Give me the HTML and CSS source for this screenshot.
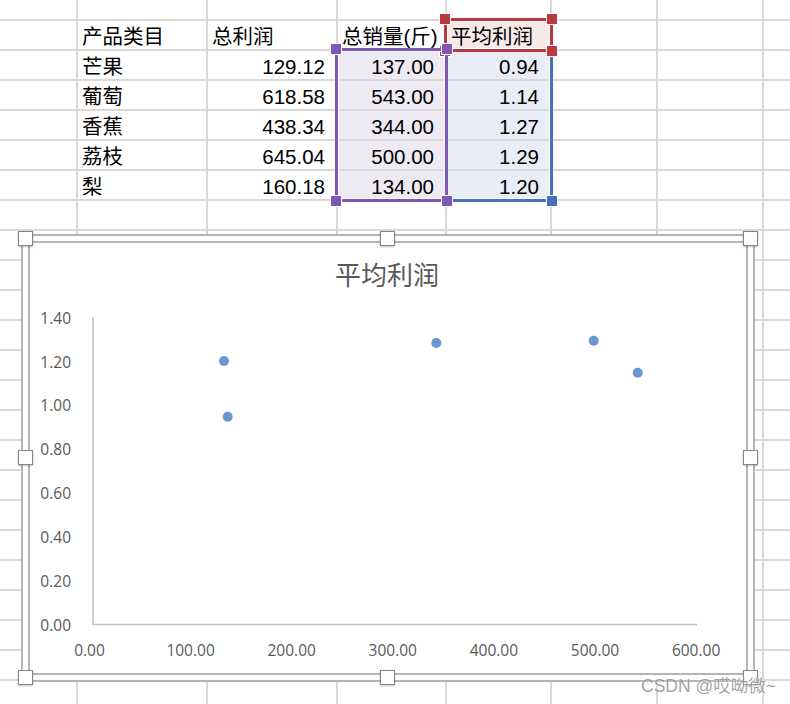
FILE: index.html
```html
<!DOCTYPE html>
<html lang="zh-CN">

<head>
    <meta charset="utf-8" />
    <link rel="stylesheet" href="styles.css">
</head>

<body>
    <div class="page">
        <div class="sheet">
            <div></div><div></div><div></div><div></div><div></div><div></div><div></div><div></div>
            <div></div><div>产品类目</div><div>总利润</div><div>总销量(斤)</div><div class="name">平均利润</div><div></div><div></div><div></div>
            <div></div><div>芒果</div><div class="num">129.12</div><div class="num x">137.00</div><div class="num y">0.94</div><div></div><div></div><div></div>
            <div></div><div>葡萄</div><div class="num">618.58</div><div class="num x">543.00</div><div class="num y">1.14</div><div></div><div></div><div></div>
            <div></div><div>香蕉</div><div class="num">438.34</div><div class="num x">344.00</div><div class="num y">1.27</div><div></div><div></div><div></div>
            <div></div><div>荔枝</div><div class="num">645.04</div><div class="num x">500.00</div><div class="num y">1.29</div><div></div><div></div><div></div>
            <div></div><div>梨</div><div class="num">160.18</div><div class="num x">134.00</div><div class="num y">1.20</div><div></div><div></div><div></div>
            <div></div><div></div><div></div><div></div><div></div><div></div><div></div><div></div>
            <div></div><div></div><div></div><div></div><div></div><div></div><div></div><div></div>
            <div></div><div></div><div></div><div></div><div></div><div></div><div></div><div></div>
            <div></div><div></div><div></div><div></div><div></div><div></div><div></div><div></div>
            <div></div><div></div><div></div><div></div><div></div><div></div><div></div><div></div>
            <div></div><div></div><div></div><div></div><div></div><div></div><div></div><div></div>
            <div></div><div></div><div></div><div></div><div></div><div></div><div></div><div></div>
            <div></div><div></div><div></div><div></div><div></div><div></div><div></div><div></div>
            <div></div><div></div><div></div><div></div><div></div><div></div><div></div><div></div>
            <div></div><div></div><div></div><div></div><div></div><div></div><div></div><div></div>
            <div></div><div></div><div></div><div></div><div></div><div></div><div></div><div></div>
            <div></div><div></div><div></div><div></div><div></div><div></div><div></div><div></div>
            <div></div><div></div><div></div><div></div><div></div><div></div><div></div><div></div>
            <div></div><div></div><div></div><div></div><div></div><div></div><div></div><div></div>
            <div></div><div></div><div></div><div></div><div></div><div></div><div></div><div></div>
            <div></div><div></div><div></div><div></div><div></div><div></div><div></div><div></div>
            <div></div><div></div><div></div><div></div><div></div><div></div><div></div><div></div>
        </div>

        <!-- выделенные диапазоны данных графика -->
        <div class="ranges">
            <div class="range range-y">
                <span class="handle br"></span>
            </div>
            <div class="range range-name">
                <span class="handle tl"></span><span class="handle tr"></span>
                <span class="handle bl"></span><span class="handle br"></span>
            </div>
            <div class="range range-x">
                <span class="handle tl"></span><span class="handle tr"></span>
                <span class="handle bl"></span><span class="handle br"></span>
            </div>
        </div>

        <div class="chart">
            <div class="plot">
                <svg viewBox="30 243 716 430">
                    <text class="title" x="387" y="285">平均利润</text>
                    <g class="y-labels">
                        <text x="71" y="323.7">1.40</text>
                        <text x="71" y="367.6">1.20</text>
                        <text x="71" y="411.4">1.00</text>
                        <text x="71" y="455.3">0.80</text>
                        <text x="71" y="499.1">0.60</text>
                        <text x="71" y="543">0.40</text>
                        <text x="71" y="586.8">0.20</text>
                        <text x="71" y="630.7">0.00</text>
                    </g>
                    <line class="axis" x1="93" y1="317" x2="93" y2="625" />
                    <line class="axis" x1="93" y1="624.5" x2="697" y2="624.5" />
                    <g class="x-labels">
                        <text x="89.5" y="655.7">0.00</text>
                        <text x="190.6" y="655.7">100.00</text>
                        <text x="291.7" y="655.7">200.00</text>
                        <text x="392.8" y="655.7">300.00</text>
                        <text x="493.9" y="655.7">400.00</text>
                        <text x="595" y="655.7">500.00</text>
                        <text x="696.1" y="655.7">600.00</text>
                    </g>
                    <g class="points">
                        <circle cx="227.7" cy="416.7" r="5" />
                        <circle cx="637.7" cy="372.7" r="5" />
                        <circle cx="436.3" cy="343" r="5" />
                        <circle cx="593.7" cy="340.7" r="5" />
                        <circle cx="224" cy="361" r="5" />
                    </g>
                </svg>
            </div>
            <span class="chart-handle h-tl"></span><span class="chart-handle h-tc"></span><span class="chart-handle h-tr"></span>
            <span class="chart-handle h-ml"></span><span class="chart-handle h-mr"></span>
            <span class="chart-handle h-bl"></span><span class="chart-handle h-bc"></span><span class="chart-handle h-br"></span>
        </div>

        <div class="watermark">CSDN @哎呦微~</div>
    </div>
</body>

</html>
```

FILE: styles.css
```css
:root {
    --cols: 76px 128px 128px 107px 103px 104px 104px 1fr;
    --rows: 19px repeat(23, 28px);
}

body {
    margin: 0;
    background: #fff;
    font-family: "Liberation Sans", "Noto Sans CJK SC", sans-serif;
}

.page {
    position: relative;
    width: 790px;
    height: 704px;
    overflow: hidden;
}

/* сетка листа: линии получаются из зазоров между ячейками */
.sheet,
.ranges {
    display: grid;
    grid-template-columns: var(--cols);
    grid-template-rows: var(--rows);
    gap: 2px;
}

.sheet {
    background: #d9d9d9;
}

.sheet > div {
    display: flex;
    align-items: flex-end;
    padding: 0 4px;
    background: #fff;
    color: #000;
    font-size: 20.5px;
    line-height: 24px;
    white-space: nowrap;
}

.sheet > .num {
    justify-content: flex-end;
    padding-right: 11px;
}

.sheet > .x {
    background: #eeeaf4;
}

.sheet > .y {
    background: #e8edf7;
}

.sheet > .name {
    background: #f8e9e9;
}

.ranges {
    position: absolute;
    top: 0;
    left: 0;
    right: 0;
    pointer-events: none;
}

.range {
    position: relative;
    margin: -3px;
    border: 3px solid currentColor;
    box-shadow: inset 0 0 0 1px #fff;
}

.range-y {
    grid-column: 5;
    grid-row: 3 / 8;
    color: #4470c2;
}

.range-name {
    grid-column: 5;
    grid-row: 2;
    color: #b83a40;
}

.range-x {
    grid-column: 4;
    grid-row: 3 / 8;
    color: #7d59b4;
}

.handle {
    position: absolute;
    width: 10px;
    height: 10px;
    background: currentColor;
    box-shadow: 0 0 0 1px #fff;
}

.handle.tl { left: -7px; top: -7px; }
.handle.tr { right: -7px; top: -7px; }
.handle.bl { left: -7px; bottom: -7px; }
.handle.br { right: -7px; bottom: -7px; }

/* диаграмма поверх листа */
.chart {
    position: absolute;
    left: 21px;
    top: 234px;
    width: 734px;
    height: 448px;
    box-sizing: border-box;
    padding: 5px;
    border: 2px solid #b5b5b5;
    background: #fff;
}

.plot {
    height: 100%;
    box-sizing: border-box;
    border: 2px solid #b5b5b5;
}

.plot svg {
    display: block;
    width: 100%;
    height: 100%;
}

.plot text {
    font-family: "Open Sans", "Noto Sans CJK SC", sans-serif;
    font-size: 15.5px;
    fill: #595959;
}

.plot .title {
    font-family: "Noto Sans CJK SC", sans-serif;
    font-size: 26px;
    text-anchor: middle;
}

.y-labels text {
    text-anchor: end;
}

.x-labels text {
    text-anchor: middle;
}

.axis {
    stroke: #bfbfbf;
    stroke-width: 1.5;
}

.points circle {
    fill: #6897d3;
}

.chart-handle {
    position: absolute;
    width: 15px;
    height: 15px;
    box-sizing: border-box;
    border: 1px solid #858585;
    background: #fff;
    box-shadow: 0 1px 2px rgba(0, 0, 0, 0.25);
}

.h-tl { left: -5px; top: -5px; }
.h-tc { left: calc(50% - 8px); top: -5px; }
.h-tr { right: -5px; top: -5px; }
.h-ml { left: -5px; top: calc(50% - 8px); }
.h-mr { right: -5px; top: calc(50% - 8px); }
.h-bl { left: -5px; bottom: -5px; }
.h-bc { left: calc(50% - 8px); bottom: -5px; }
.h-br { right: -5px; bottom: -5px; }

.watermark {
    position: absolute;
    left: 641px;
    top: 675px;
    font-size: 17.5px;
    line-height: 22px;
    color: rgba(120, 120, 120, 0.7);
    text-shadow: 0 0 2px #fff;
    white-space: nowrap;
}
```
